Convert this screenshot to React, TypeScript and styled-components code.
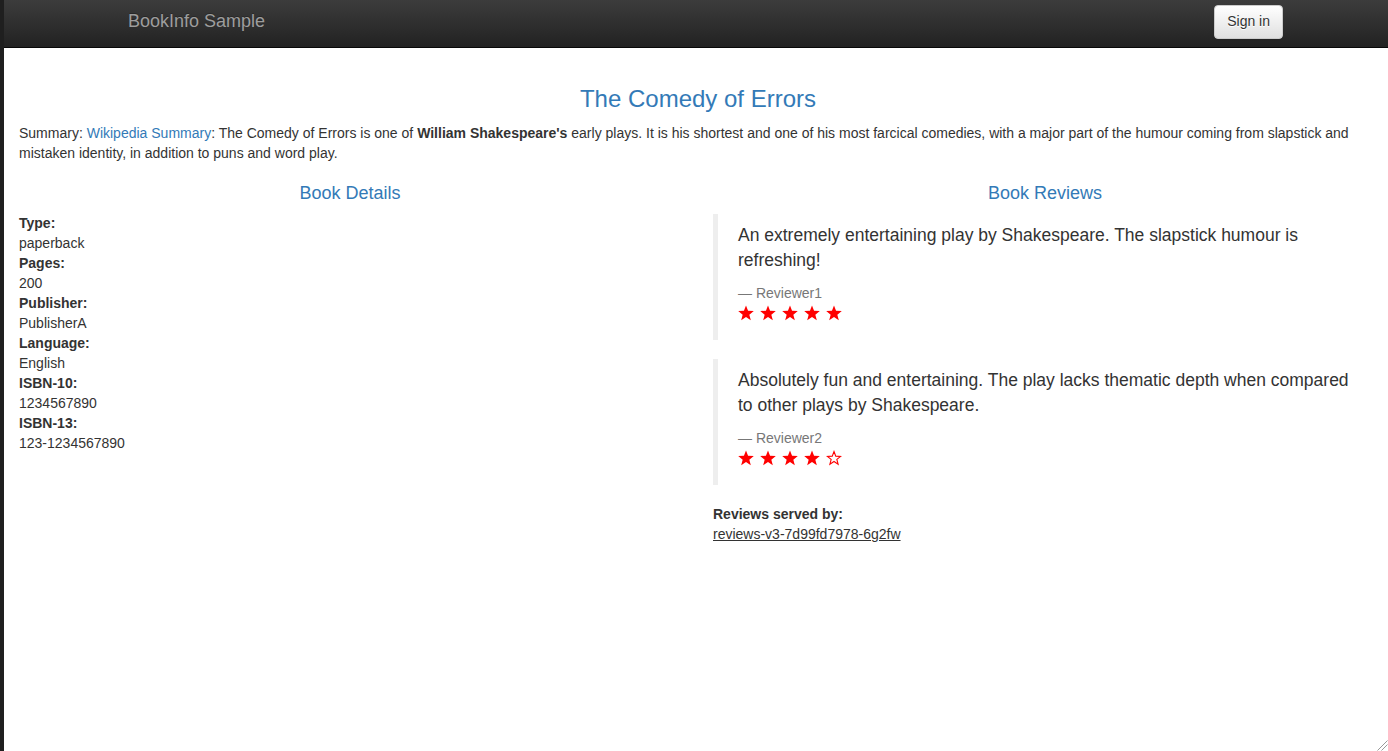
import React from "react";
import styled, { createGlobalStyle } from "styled-components";

const GlobalStyle = createGlobalStyle`
  html, body {
    margin: 0;
    padding: 0;
  }
  body {
    font-family: "Liberation Sans", Helvetica, Arial, sans-serif;
    font-size: 14px;
    line-height: 1.42857143;
    color: #333;
    background: #fff;
  }
  * {
    box-sizing: border-box;
  }
`;

const Frame = styled.div`
  position: relative;
  min-height: 100vh;
  border-left: 4px solid #1f1f1f;
  overflow: hidden;
`;

const Navbar = styled.nav`
  height: 48px;
  display: flex;
  align-items: flex-start;
  justify-content: space-between;
  padding: 0 105px 0 124px;
  background-image: linear-gradient(to bottom, #3c3c3c 0%, #222 100%);
  border-bottom: 1px solid #080808;
`;

const Brand = styled.a`
  padding-top: 11px;
  font-size: 18px;
  line-height: 20px;
  color: #9d9d9d;
  text-decoration: none;
  text-shadow: 0 -1px 0 rgba(0, 0, 0, 0.25);
`;

const SignIn = styled.button`
  margin-top: 5px;
  height: 34px;
  padding: 5px 12px 7px;
  font-family: inherit;
  font-size: 14px;
  line-height: 20px;
  color: #333;
  background-image: linear-gradient(to bottom, #fff 0%, #e0e0e0 100%);
  border: 1px solid #ccc;
  border-radius: 4px;
  text-shadow: 0 1px 0 #fff;
  box-shadow: inset 0 1px 0 rgba(255, 255, 255, 0.15), 0 1px 1px rgba(0, 0, 0, 0.075);
  cursor: pointer;
`;

const Main = styled.main`
  padding: 20px 15px 0;
`;

const Title = styled.h3`
  margin: 18px 0 11px;
  padding-left: 4px;
  font-size: 24px;
  font-weight: 400;
  line-height: 1.1;
  color: #337ab7;
  text-align: center;
`;

const Summary = styled.p`
  margin: 0 0 11px;
  a {
    color: #337ab7;
    text-decoration: none;
  }
`;

const Row = styled.div`
  display: grid;
  grid-template-columns: 1fr 1fr;
  margin: 0 -15px;
`;

const Column = styled.section<{ $left?: number; $right?: number }>`
  padding: 0 ${(p) => p.$right ?? 15}px 0 ${(p) => p.$left ?? 15}px;
`;

const SectionTitle = styled.h4`
  margin: 10px 0 9px;
  font-size: 18px;
  font-weight: 400;
  line-height: 1.1;
  color: #337ab7;
  text-align: center;
`;

const Details = styled.dl`
  margin: 0 0 20px;
  dt {
    font-weight: 700;
  }
  dd {
    margin: 0;
  }
`;

const ReviewList = styled.div`
  padding-top: 1px;
`;

const Review = styled.blockquote`
  margin: 0 0 19px;
  padding: 9px 20px 11px;
  font-size: 17.5px;
  border-left: 5px solid #eee;
  p {
    margin: 0 0 10px;
  }
`;

const Reviewer = styled.footer`
  font-size: 14px;
  line-height: 1.42857143;
  color: #777;
  &::before {
    content: "\\2014 \\00A0";
  }
`;

const Stars = styled.div`
  display: flex;
  gap: 6px;
  height: 26px;
  padding-top: 2px;
`;

const ServedBy = styled.dl`
  margin: 0;
  dt {
    font-weight: 700;
  }
  dd {
    margin: 0;
  }
`;

const Grip = styled.svg`
  position: absolute;
  right: 0;
  bottom: 0;
`;

const STAR_POINTS =
  "8,0.4 10.06,5.77 15.8,6.07 11.33,9.68 12.82,15.23 8,12.1 3.18,15.23 4.67,9.68 0.2,6.07 5.94,5.77";

function Star({ filled }: { filled: boolean }) {
  return (
    <svg width="16" height="16" viewBox="0 0 16 16">
      {filled ? (
        <polygon points={STAR_POINTS} fill="#f00" />
      ) : (
        <polygon
          points={STAR_POINTS}
          fill="none"
          stroke="#f00"
          strokeWidth="1.3"
          transform="translate(1.2 1.2) scale(0.85)"
        />
      )}
    </svg>
  );
}

interface IReview {
  text: string;
  reviewer: string;
  rating: number;
}

const reviews: IReview[] = [
  {
    text: "An extremely entertaining play by Shakespeare. The slapstick humour is refreshing!",
    reviewer: "Reviewer1",
    rating: 5,
  },
  {
    text: "Absolutely fun and entertaining. The play lacks thematic depth when compared to other plays by Shakespeare.",
    reviewer: "Reviewer2",
    rating: 4,
  },
];

const details: [string, string][] = [
  ["Type:", "paperback"],
  ["Pages:", "200"],
  ["Publisher:", "PublisherA"],
  ["Language:", "English"],
  ["ISBN-10:", "1234567890"],
  ["ISBN-13:", "123-1234567890"],
];

function App() {
  return (
    <Frame>
      <GlobalStyle />
      <Navbar>
        <Brand href="#">BookInfo Sample</Brand>
        <SignIn type="button">Sign in</SignIn>
      </Navbar>
      <Main>
        <Title>The Comedy of Errors</Title>
        <Summary>
          Summary: <a href="#">Wikipedia Summary</a>: The Comedy of Errors is one of{" "}
          <b>William Shakespeare's</b> early plays. It is his shortest and one of his most
          farcical comedies, with a major part of the humour coming from slapstick and
          mistaken identity, in addition to puns and word play.
        </Summary>
        <Row>
          <Column>
            <SectionTitle>Book Details</SectionTitle>
            <Details>
              {details.map(([label, value]) => (
                <React.Fragment key={label}>
                  <dt>{label}</dt>
                  <dd>{value}</dd>
                </React.Fragment>
              ))}
            </Details>
          </Column>
          <Column $left={17} $right={11}>
            <SectionTitle>Book Reviews</SectionTitle>
            <ReviewList>
              {reviews.map((review) => (
                <Review key={review.reviewer}>
                  <p>{review.text}</p>
                  <Reviewer>{review.reviewer}</Reviewer>
                  <Stars>
                    {[1, 2, 3, 4, 5].map((n) => (
                      <Star key={n} filled={n <= review.rating} />
                    ))}
                  </Stars>
                </Review>
              ))}
            </ReviewList>
            <ServedBy>
              <dt>Reviews served by:</dt>
              <dd>
                <u>reviews-v3-7d99fd7978-6g2fw</u>
              </dd>
            </ServedBy>
          </Column>
        </Row>
      </Main>
      <Grip width="13" height="13" viewBox="0 0 13 13">
        <path d="M12.5 2.5 L2.5 12.5 M12.5 6.5 L6.5 12.5" stroke="#999" strokeWidth="1" />
      </Grip>
    </Frame>
  );
}

export default App;
